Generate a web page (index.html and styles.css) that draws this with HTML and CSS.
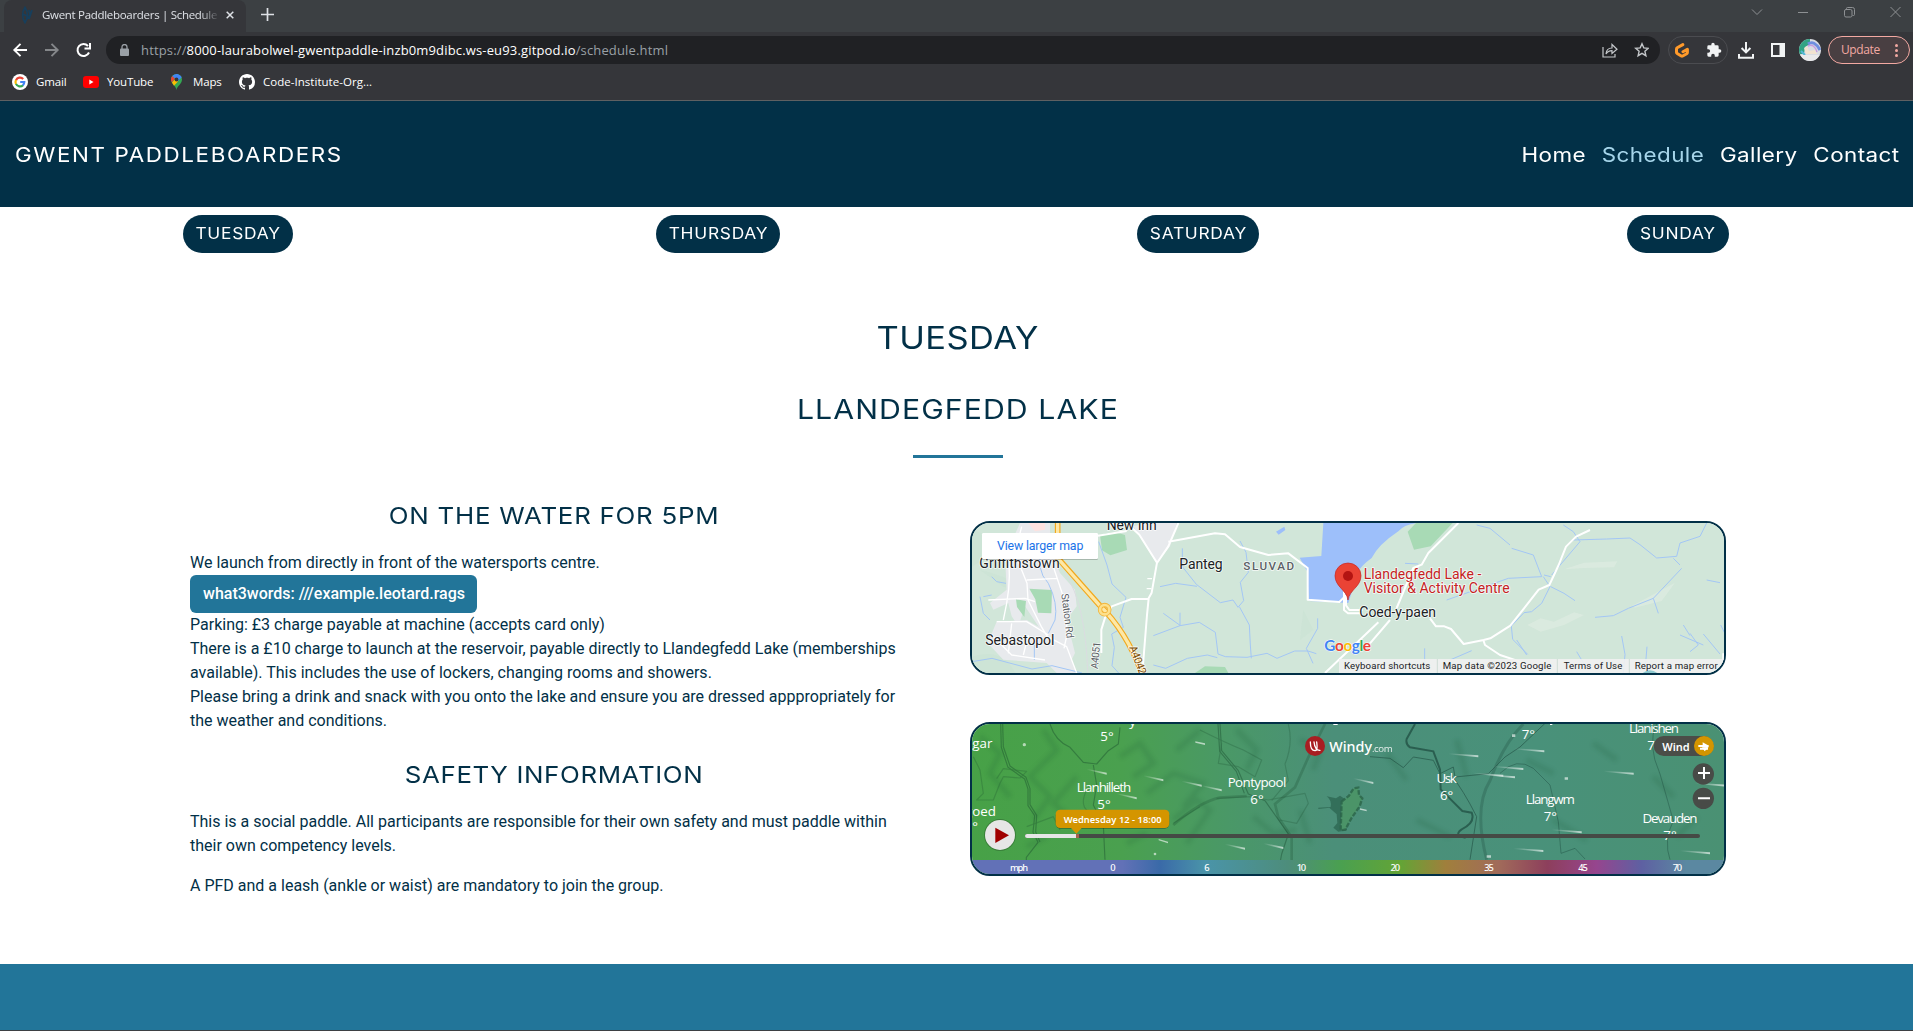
FILE: index.html
```html
<!DOCTYPE html>
<html lang="en">
<head>
<meta charset="utf-8">
<title>Gwent Paddleboarders | Schedule</title>
<link rel="stylesheet" href="styles.css">
</head>
<body>
<div class="browser">
  <div class="tabstrip">
    <div class="tab">
      <svg class="favicon" width="12" height="18" viewBox="0 0 12 18" fill="none" stroke="#173f5c" stroke-width="1.800"><path d="M4 1.500C1 6 1 12 4 16.500 7 12 7 6 4 1.500ZM2 8l4 2M8 4l1 5-3 4M8 13l3-9"/></svg>
      <span class="tab-title">Gwent Paddleboarders | Schedule</span>
      <svg class="tab-close" width="8" height="8" viewBox="0 0 8 8" stroke="#dee1e6" stroke-width="1.500"><path d="M.7.7l6.600 6.600M7.300.7L.7 7.300"/></svg>
    </div>
    <svg class="new-tab" width="13" height="13" viewBox="0 0 13 13" stroke="#dee1e6" stroke-width="1.700"><path d="M6.500 0v13M0 6.500h13"/></svg>
    <svg class="window-controls" width="150" height="12" viewBox="0 0 150 12" fill="none" stroke="#8d9093" stroke-width="1"><path d="M1 3.500l5 5 5-5M47 6.500h10M139.500 1l10 10M149.500 1l-10 10"/><rect x="93.500" y="3.500" width="7.500" height="7.500" rx="1.500"/><path d="M95.500 3.200V2.500q0-1 1-1h5q2 0 2 2v5q0 1-1 1h-1"/></svg>
  </div>
  <div class="toolbar">
    <svg class="nav-icons" width="80" height="16" viewBox="0 0 80 16" fill="none" stroke-width="1.900"><path stroke="#fff" d="M15 8H2.500M8.500 1.800L2.300 8l6.200 6.200"/><path stroke="#85878a" d="M33 8h12.500M39.500 1.800L45.700 8l-6.200 6.200"/><path stroke="#fff" d="M77 10.500A6 6 0 1 1 76 4M78 1v5.500h-5.500" stroke-width="2"/></svg>
    <div class="omnibox">
      <svg width="9" height="12" viewBox="0 0 9 12"><rect y="4.500" width="9" height="7.500" rx="1" fill="#9aa0a6"/><path d="M2 5V3a2.500 2.500 0 0 1 5 0v2" fill="none" stroke="#9aa0a6" stroke-width="1.300"/></svg>
      <span class="url">https://<b>8000-laurabolwel-gwentpaddle-inzb0m9dibc.ws-eu93.gitpod.io</b>/schedule.html</span>
      <svg class="omni-actions" width="47" height="16" viewBox="0 0 47 16" fill="none" stroke="#c4c7ca" stroke-width="1.200"><path d="M1 5v10h12v-3M4 12c.3-4 2.200-6 6-6V2.500L15 7.200 10 11.500V8.700C7.500 8.700 5.500 9.500 4 12Z"/><path stroke-width="1.400" d="M40 1.800l1.800 4.100 4.500.4-3.400 3 1 4.400-3.900-2.300-3.900 2.300 1-4.400-3.400-3 4.500-.4Z"/></svg>
    </div>
    <div class="extensions">
      <svg width="14" height="15" viewBox="0 0 14 15" fill="none" stroke="#ff9a2a" stroke-width="3" stroke-linejoin="round" stroke-linecap="round"><path d="M7.800 1.600L2.200 4.800q-.7.400-.7 1.200v3.200q0 .8.700 1.200L6.300 13q.7.400 1.400 0l4-2.300q.7-.4.700-1.200V6.300L8 8.800"/></svg>
      <svg width="16" height="16" viewBox="0 0 24 24" fill="#f1f3f4"><path d="M20.500 11H19V7a2 2 0 0 0-2-2h-4V3.500a2.500 2.500 0 0 0-5 0V5H4a2 2 0 0 0-2 2v3.800h1.500a2.700 2.700 0 0 1 0 5.400H2V20a2 2 0 0 0 2 2h3.800v-1.500a2.700 2.700 0 0 1 5.400 0V22H17a2 2 0 0 0 2-2v-4h1.500a2.500 2.500 0 0 0 0-5z"/></svg>
    </div>
    <svg class="download" width="16" height="17" viewBox="0 0 16 17" fill="none" stroke="#f1f3f4" stroke-width="2"><path d="M8 0v10M3.600 6L8 10.400 12.400 6M1 12v3.800h14V12"/></svg>
    <svg class="side-panel" width="14" height="14" viewBox="0 0 14 14"><path fill="#f1f3f4" fill-rule="evenodd" d="M0 0h14v14H0zM2 2v10h6.500V2z"/></svg>
    <svg class="avatar" width="22" height="22" viewBox="0 0 22 22"><defs><clipPath id="av"><circle cx="11" cy="11" r="11"/></clipPath></defs><g clip-path="url(#av)"><path fill="#d9dce2" d="M0 0h22v22H0z"/><path fill="#32a383" d="M0 0h11v5L6 8l-1 7H0z"/><path d="M9 5c4-3 8-1 12 6" fill="none" stroke="#6f8ee0" stroke-width="3"/><path d="M9 7c4-2 7 0 9 6" fill="none" stroke="#c79be0" stroke-width="1.500"/><path d="M5 9l3-2 2 5 6-1 2 4H7z" fill="#f1e3d0"/><path d="M2 12l4 4" stroke="#55b6d8" stroke-width="2"/><path fill="#e9e9ea" d="M0 16h22v6H0z"/></g></svg>
    <div class="update"><span>Update</span><svg width="3" height="13" viewBox="0 0 3 13" fill="#f3a9a2"><circle cx="1.500" cy="1.500" r="1.500"/><circle cx="1.500" cy="6.500" r="1.500"/><circle cx="1.500" cy="11.500" r="1.500"/></svg></div>
  </div>
  <div class="bookmarks">
    <div class="bm"><svg width="16" height="16" viewBox="0 0 16 16" fill="none" stroke-width="2.200"><circle cx="8" cy="8" r="8" fill="#fff"/><path stroke="#ea4335" d="M4 6.200A4.400 4.400 0 0 1 11.200 5"/><path stroke="#fbbc05" d="M4 6A4.400 4.400 0 0 0 4 10"/><path stroke="#34a853" d="M4 9.900A4.400 4.400 0 0 0 11 11.200"/><path stroke="#4285f4" d="M8.200 8H12.300A4.400 4.400 0 0 1 10.800 11.300"/></svg><span>Gmail</span></div>
    <div class="bm yt"><svg width="16" height="12" viewBox="0 0 16 12"><rect width="16" height="12" rx="3" fill="#f00"/><path d="M6.300 3.500v5L10.500 6z" fill="#fff"/></svg><span>YouTube</span></div>
    <div class="bm maps"><svg width="11" height="16" viewBox="0 0 11 16"><path fill="#34a853" d="M5.500 16C5 12 0 10 0 5.500a5.500 5.500 0 0 1 11 0C11 10 6 12 5.500 16z"/><path fill="#fbbc04" d="M1 8.500L4 5l3 2.500-4 4.200z"/><path fill="#ea4335" d="M0 5.500Q0 3 1.300 2L4 4.500 .9 8.300Q0 7 0 5.500z"/><path fill="#4285f4" d="M1.300 2A5.500 5.500 0 0 1 10.600 3.500L7 7 4 4.600z"/><circle cx="5.500" cy="5.500" r="1.900" fill="#35363a"/></svg><span>Maps</span></div>
    <div class="bm gh"><svg width="16" height="16" viewBox="0 0 16 16" fill="#fff"><path d="M8 0C3.580 0 0 3.580 0 8c0 3.540 2.290 6.530 5.470 7.590.4.070.55-.17.550-.38 0-.19-.01-.82-.01-1.490-2.010.37-2.530-.49-2.690-.94-.09-.23-.48-.94-.82-1.130-.28-.15-.68-.52-.01-.53.630-.01 1.080.58 1.230.82.720 1.210 1.870.87 2.330.66.070-.52.280-.87.510-1.070-1.780-.2-3.640-.89-3.640-3.950 0-.87.310-1.590.82-2.150-.08-.2-.36-1.020.08-2.120 0 0 .67-.21 2.200.82.640-.18 1.320-.27 2-.27s1.360.09 2 .27c1.530-1.040 2.200-.82 2.200-.82.440 1.100.16 1.920.08 2.120.51.560.82 1.270.82 2.150 0 3.070-1.870 3.750-3.650 3.950.290.250.540.730.540 1.480 0 1.070-.01 1.930-.01 2.200 0 .21.150.46.550.38A8.010 8.010 0 0 0 16 8c0-4.420-3.580-8-8-8z"/></svg><span>Code-Institute-Org...</span></div>
  </div>
</div>

<header class="site-header">
  <a class="brand wide">GWENT PADDLEBOARDERS</a>
  <nav class="site-nav wide"><a>Home</a><a class="active">Schedule</a><a>Gallery</a><a>Contact</a></nav>
</header>

<div class="days">
  <a class="d1"><span class="wide">TUESDAY</span></a><a class="d2"><span class="wide">THURSDAY</span></a><a class="d3"><span class="wide">SATURDAY</span></a><a class="d4"><span class="wide">SUNDAY</span></a>
</div>

<main>
  <h1 class="wide">TUESDAY</h1>
  <h2 class="wide">LLANDEGFEDD LAKE</h2>
  <hr>
  <div class="columns">
    <section class="info">
      <h3 class="wide">ON THE WATER FOR 5PM</h3>
      <p>We launch from directly in front of the watersports centre.<br>
      <a class="w3w">what3words: ///example.leotard.rags</a><br>
      Parking: £3 charge payable at machine (accepts card only)<br>
      There is a £10 charge to launch at the reservoir, payable directly to Llandegfedd Lake (memberships available). This includes the use of lockers, changing rooms and showers.<br>
      Please bring a drink and snack with you onto the lake and ensure you are dressed apppropriately for the weather and conditions.</p>
      <h3 class="wide safety">SAFETY INFORMATION</h3>
      <p>This is a social paddle. All participants are responsible for their own safety and must paddle within their own competency levels.</p>
      <p>A PFD and a leash (ankle or waist) are mandatory to join the group.</p>
    </section>
    <section class="maps-col">
      <div class="card">
        <svg class="map" viewBox="36 39 2256 450" width="752" height="150">
          <path fill="#d1e6d9" d="M36 39h2256v450H36z"/>
          <path fill="#c9e2d3" d="M36 60l60 20v50l-60 40zM36 440q90-30 130 49H36zM1030 300l30 60-40 30zM60 180q90 20 130 60l-60-10z" opacity=".6"/>
          <path fill="#e8eaed" d="M180 39h90v80l30 70 45 50 5 50-30 40 25 100-30 60-40-60-20-50-60-90-20 60-20-30-10-40-45 20-10-20 50-40-5-100zM560 39h90l-20 70-40 50-70-110zM110 335l90-5 70 40 50 40 30 79h-60l-30-30-130-10-47-50z"/>
          <path fill="#fde2e0" d="M205 39h50v20l-30 5z"/>
          <path fill="#a8dab5" d="M420 75q40-15 75 0l6 45-50 16-25-15zM208 236l68 4-2 70-40-2-8-40zM168 268l30 5-5 48-22-30zM705 489l30-20 60 2 10 18z"/>
          <path fill="#9dbffa" d="M1090 39h280q-40 6-55 25-60 40-80 80-30 22-40 40l-30 95-118-6-6-90-22-40 65-5zM948 65l25-15 3 10-20 14z"/>
          <g fill="none" stroke="#a3c6f5" stroke-width="3" stroke-linejoin="round">
            <path d="M667 115v55l42 53 72 55 38-8 15 22 17-20-10-55 24-30-7-60-18-34M600 230l47-10 64 9M838 290l30 55 3 60 3 40M580 377l80-30 58-10 48 30 8 65 22 8 65 2 60-12 30 15 53-22 40 0 25 8M610 310l50 36v-38M580 465l37 10 65-30 60-10 30 8M1073 325v30l-34 60 20 45M416 95l25 70 15 57 42 40-18 60 10 30-35 20 8 40-7 55 20 22M60 260l10 50 20 20M70 260l25-5M95 200l15 15 28 5M36 455l60-10 120 32 60-10 90 22M223 390v60"/>
            <path d="M245 100q-20 80 20 120 30 60 20 110l-20 40"/>
          </g>
          <g fill="none" stroke="#fff" stroke-width="6" stroke-linejoin="round">
            <path d="M185 50l-20 80 36 90 3 50 40 80 18 30 58 30 30 79M270 140l40 120 12 110-10 45M85 270l110-5 30 10M145 150q8 60-5 130l-10 50M200 210l90-5M110 335l90 0 65 40M95 375l60 60 100 15M155 340l-10 90M205 375l-15 60" stroke-width="4"/>
            <path d="M414 77l86-14M500 39l38 35 53 84-16 90-10 18-50 1-60 22-17 25-14 45v70M655 39l-30 70-34 50M566 265l-5 50-14 174M625 95l140-25 30 3 45 38 85 24 60-5 58 44v95l95 7 20-20 0 30 10 14 40 0M1095 489l160-152"/>
            <path d="M562 206h14M560 236h14" stroke-width="4"/>
          </g>
          <path d="M315 190q62 90 68 299" stroke="#dadce0" stroke-width="3" fill="none"/>
          <g fill="none"><path d="M293 39v105L418 285Q500 365 545 489" stroke="#f2a91e" stroke-width="17"/><path d="M293 39v105L418 285Q500 365 545 489" stroke="#fde8a6" stroke-width="10"/><circle cx="434" cy="299" r="14" stroke="#f2b63c" stroke-width="13"/><circle cx="434" cy="299" r="14" stroke="#fde08b" stroke-width="8"/></g>
          <g transform="translate(1140 0)">
            <path fill="#a8dab5" d="M203 65l25-26h110l-66 70-50 10z"/>
            <path fill="#dcebe0" d="M672 178l60-20 100-4-10 18-90 2zM562 345l40-20 40 10 60-28 30 8-60 30-70 20zM875 288l130-70-40 55-80 20z" opacity=".8"/>
            <g fill="none" stroke="#a3c6f5" stroke-width="3" stroke-linejoin="round"><path d="M410 45l40 10 60 50M515 115l65 20 25 65-100 5-185 65M610 200l20 30-25 50-30 25-23 3-38 40 4 40 45 45M632 200l-20-5M700 90l100-3 70-3 30 20 50 40 60-5 10-40 60-20 20-40M670 45l30 20 20 30-85 100M632 230l40 20 33 22M1000 145l20 20M1025 175l-85 90-75 30-45 22-55 5M940 265l15 45M845 378l10 55-5 56M921 410l-5 60M1020 375l70 30M1050 370l25 35-25 20M1030 345l20 32M1090 372l50 60M195 160l40 2M254 415v45M330 450l65-28M530 390l30 45M710 425l30 50M1100 210l40 8M1142 345l15 30"/></g>
            <g fill="none" stroke="#fff" stroke-width="6" stroke-linejoin="round"><path d="M355 39l-90 90-20 35-25 10-50 120M90 400l60-70M12 240v60l12 10h40M270 325l18 24h25l20 8 38 45 60-12 20-5 60-38 85-108 32-14 28-60 22-55 30-30 42-20M430 390l5 15 45 30 60 20 60 34M1150 430v59"/></g>
          </g>
          <g class="lab" text-anchor="start">
            <text x="440" y="60" font-size="42" textLength="150">New Inn</text>
            <text x="58" y="174" font-size="42" textLength="241">Griffithstown</text>
            <text x="76" y="405" font-size="42" textLength="207">Sebastopol</text>
            <text x="658" y="177" font-size="42" textLength="130">Panteg</text>
            <text x="850" y="180" font-size="35" textLength="152" class="muted" font-weight="500">SLUVAD</text>
            <text x="1198" y="321" font-size="42" textLength="230">Coed-y-paen</text>
            <text x="304" y="252" font-size="31" textLength="135" class="muted" transform="rotate(83 304 252)">Station Rd</text>
            <text x="413" y="478" font-size="31" textLength="82" class="muted" transform="rotate(-84 413 478)">A4051</text>
            <text x="507" y="412" font-size="33" textLength="90" class="trunk" transform="rotate(69 507 412)">A4042</text>
            <text x="1211" y="206" font-size="42" textLength="353" class="poi">Llandegfedd Lake -</text>
            <text x="1211" y="249" font-size="42" textLength="438" class="poi">Visitor &amp; Activity Centre</text>
          </g>
          <path fill="#ea4335" stroke="#c5221f" stroke-width="2" d="M1164 270c-4-30-39-40-39-73a39 38 0 0 1 78 0c0 33-35 43-39 73z"/><circle cx="1164" cy="198" r="15" fill="#b31412"/>
          <text class="goog" x="1093" y="423" font-size="46" textLength="140"><tspan fill="#4285f4">G</tspan><tspan fill="#ea4335">o</tspan><tspan fill="#fbbc04">o</tspan><tspan fill="#4285f4">g</tspan><tspan fill="#34a853">l</tspan><tspan fill="#ea4335">e</tspan></text>
          <rect x="66" y="71" width="348" height="79" rx="4" fill="#0003"/><rect x="66" y="69" width="348" height="78" rx="4" fill="#fff"/>
          <text x="111" y="120" font-size="37" textLength="259" fill="#1a73e8" class="rb">View larger map</text>
          <path fill="#f1f1f1" fill-opacity=".88" d="M1137 447h1155v42H1137z"/>
          <path stroke="#cfdcd5" stroke-width="3" d="M1432 447v42M1792 447v42M2008 447v42"/>
          <path fill="#8ec9cf" d="M2048 489q22-16 44 0z"/>
          <g class="rb" font-size="29" fill="#202124"><text x="1152" y="477" textLength="259">Keyboard shortcuts</text><text x="1448" y="477" textLength="326">Map data ©2023 Google</text><text x="1811" y="477" textLength="176">Terms of Use</text><text x="2024" y="477" textLength="249">Report a map error</text></g>
        </svg>
      </div>
      <div class="card">
        <svg class="map" viewBox="36 42 2256 450" width="752" height="150">
          <defs>
            <linearGradient id="wind"><stop offset="0" stop-color="#47a147"/><stop offset=".2" stop-color="#4aa04f"/><stop offset=".34" stop-color="#4a9867"/><stop offset=".48" stop-color="#4b8f79"/><stop offset=".75" stop-color="#49917a"/><stop offset="1" stop-color="#4a9173"/></linearGradient>
            <linearGradient id="scale"><stop offset="0" stop-color="#6271b7"/><stop offset=".2" stop-color="#6271b7"/><stop offset=".25" stop-color="#3a6aa8"/><stop offset=".31" stop-color="#4a94a9"/><stop offset=".42" stop-color="#4d8d7b"/><stop offset=".49" stop-color="#4aa050"/><stop offset=".57" stop-color="#63a436"/><stop offset=".63" stop-color="#a07f3c"/><stop offset=".7" stop-color="#a16b5a"/><stop offset=".765" stop-color="#8d3f5c"/><stop offset=".83" stop-color="#96458e"/><stop offset=".89" stop-color="#5e60a2"/><stop offset=".95" stop-color="#5b88a1"/><stop offset="1" stop-color="#5b88a1"/></linearGradient>
            <linearGradient id="streak"><stop offset="0" stop-color="#fff" stop-opacity="0"/><stop offset="1" stop-color="#fff" stop-opacity=".65"/></linearGradient>
            <filter id="soft"><feGaussianBlur stdDeviation="7"/></filter>
          </defs>
          <path fill="url(#wind)" d="M36 42h2256v450H36z"/>
          <g fill="none" stroke="#1c5a34" stroke-width="16" opacity=".17" filter="url(#soft)"><path d="M60 80l60 50-30 60 60 70M250 60l40 60-80 80 60 60-50 70M350 200l-70 80 60 50M480 140l60-40 40 60-60 40M560 250l80-60 90 30-60 70M640 330l70-60 40 30-70 100M830 60l60 60-30 60M880 320l60 50 70-10M720 60l-70 60M1020 90l60 30-20 60M1020 300l30 100M1280 130l60 80M1370 330l100 50M1490 90l30 110M1700 150l80 40M1900 100l70 50M1780 330l100 60M2080 200l60 60M2150 380l60-60M500 400l60-30M200 410l60-30"/></g>
          <g fill="none" stroke="#17472c" stroke-width="3.500" opacity=".4" stroke-linejoin="round"><path d="M122 42l2 70 20 60 50 35 10 30 0 50 20 30-5 50 15 30-35 45 0 47M128 42l2 68 20 58 48 34 12 34 0 48 20 32-3 50 13 30M270 42q15 50 60 70l40 45 40 5 35-40 30-20 5-50M400 165l10 60-10 60 30 60 5 104M780 42l5 80 50 60 30 70 50 20 70 100-20 60-5 27M774 42l5 82 50 60 24 66"/><path d="M200 350l80-30 20 40M40 140l20 40 10 70-20 20 50 0 20-50 10-20 50 4 20-20-70-8-20 30M720 60q80 40 130 60l55 30-20 50-50-30-60-10 10-60M770 265l105-5 50 10 110-20 10 30-35 60-50-10M640 340l80-50M380 240q-20 40 0 60l50 10" opacity=".6"/><path d="M985 42q15 60-10 120l10 50-50 60" opacity=".6"/></g>
          <g fill="none" stroke="#17472c" stroke-width="8" opacity=".25"><path d="M1095 42l-50 100-40 90-60 50 10 40 40 60 0 70M640 345q80-70 140-82l80-5"/></g>
          <path fill="#1c4f3b" opacity=".5" d="M1075 293l37-2q4-20-12-32l28 6 12-8 20 14v90l-25 4-15-12 12-14-2-26-22-20-33 4z"/>
          <path fill="#4b9468" stroke="#2a6449" stroke-width="7" stroke-opacity=".8" stroke-dasharray="14 5" d="M1145 275l22-18 14-22 14-2 2 22 10 10-8 24-25 36-18 34-14 2z"/>
          <g transform="translate(1140 0)">
            <g fill="none" stroke="#163f35" opacity=".6"><path stroke-width="6" d="M225 42l-25 45q-4 15 10 25l70 12 20 54 2 60 30 30 35 35 28 5q12 30-30 50-15 10-8 20l20 5"/><path stroke-width="3" d="M90 140l60 5 40 28 30-32 60 10 20 40 40-20 5 30 100-10 50-50 45-30 75-71M330 190q40 50 80 130l-20 129" opacity=".8"/><path stroke-width="9" opacity=".4" d="M550 42q-60 60-100 170-50 80-10 237"/><path stroke-width="3" opacity=".6" d="M480 190q50-50 100-15l50 50 25 110 8 95 42-15 30 32M950 42q-30 60 10 150l40 140q-30 60-10 117"/></g>
          </g>
          <g fill="url(#streak)"><path id="st" d="M0 0l60 12v6L0 3z" transform="translate(380 176)"/><use href="#st" transform="translate(170 20)"/><use href="#st" transform="translate(285 36) "/><use href="#st" transform="translate(345 50)"/><use href="#st" transform="translate(90 74)"/><use href="#st" transform="translate(415 225)"/><use href="#st" transform="translate(530 223)"/><use href="#st" transform="translate(800 28)"/></g>
          <g fill="url(#streak)"><path id="sr" d="M0 0l90 6v6L0 3z" transform="translate(1465 130)"/><use href="#sr" transform="translate(75 58)"/><use href="#sr" transform="translate(110 63)"/><use href="#sr" transform="translate(198 -15)"/><use href="#sr" transform="translate(135 38)"/><use href="#sr" transform="translate(466 52)"/><use href="#sr" transform="translate(310 228)"/><use href="#sr" transform="translate(195 284)"/><use href="#sr" transform="translate(695 291)"/><use href="#sr" transform="translate(740 88)"/></g>
          <g fill="#fff" opacity=".6"><circle cx="193" cy="104" r="5"/><circle cx="585" cy="432" r="4"/><path d="M706 94l29 6v5l-29-7zM596 387l28 8v5l-28-9zM1656 73h10v8h-10zM1814 202h10v7h-10zM1580 436h13v7h-13zM1200 295l20 4v5l-20-5z"/></g>
          <g class="wl" font-size="40" text-anchor="middle">
            <text x="97" y="115" text-anchor="end">egar</text><text x="108" y="317" text-anchor="end">goed</text><text x="45" y="364">°</text><text x="518" y="47">y</text><text x="441" y="92">5°</text>
            <text x="432" y="246" textLength="163">Llanhilleth</text><text x="432" y="297">5°</text>
            <text x="891" y="230" textLength="176">Pontypool</text><text x="891" y="281">6°</text>
            <text x="1460" y="218" textLength="61">Usk</text><text x="1460" y="270">6°</text>
            <text x="1705" y="87">7°</text><text x="1771" y="282" textLength="147">Llangwm</text><text x="1771" y="333">7°</text>
            <text x="2082" y="69" textLength="150">Llanishen</text><text x="2082" y="120">7°</text>
            <text x="2130" y="339" textLength="165">Devauden</text><text x="2130" y="391">7°</text>
          </g>
          <path stroke="#fff" stroke-width="4" d="M1120 43h13M1770 43h7"/>
          <circle cx="1065" cy="108" r="30" fill="#a81e22"/><path d="M1051 96q0 26 14 26 9 0 5-26M1062 96q3 26 18 25" fill="none" stroke="#fff" stroke-width="4" stroke-linecap="round"/>
          <text class="wd" x="1108" y="125" font-size="43" font-weight="500" textLength="128">Windy</text><text class="wl" x="1236" y="126" font-size="29" textLength="62" opacity=".85">.com</text>
          <rect x="195" y="372" width="2025" height="12" rx="6" fill="#454a45"/><path fill="#e6e6e6" d="M201 372h147v12H201a6 6 0 0 1 0-12z"/><path fill="#a8604c" d="M348 372h9v12h-9z"/>
          <rect x="287" y="302" width="341" height="54" rx="14" fill="#0005"/><path fill="#d49500" d="M301 299h313q14 0 14 14v27q0 14-14 14H365l-16 17-16-17h-32q-14 0-14-14v-27q0-14 14-14z"/>
          <text class="wd" x="311" y="339" font-size="28" font-weight="600" textLength="294">Wednesday 12 - 18:00</text>
          <circle cx="120" cy="375" r="48" fill="#0003"/><circle cx="120" cy="375" r="45" fill="#e6e6e6"/><path fill="#a00000" d="M106 353l41 23-41 23z"/>
          <rect x="2081" y="78" width="180" height="60" rx="30" fill="#4b4d48"/><text class="wd" x="2107" y="122" font-size="33" font-weight="600" textLength="82">Wind</text>
          <circle cx="2232" cy="108" r="30" fill="#d49500"/><path fill="none" stroke="#fff" stroke-width="6" d="M2215 108h30M2220 116h24"/><path fill="#fff" d="M2228 97l20 11-6 4-14-1zM2226 112h20l-12 12z"/>
          <circle cx="2230" cy="192" r="32" fill="#484b47"/><circle cx="2230" cy="265" r="32" fill="#484b47"/><path stroke="#fff" stroke-width="6" d="M2214 189h36M2232 171v36M2214 265h36"/>
          <path fill="url(#scale)" d="M36 450h2256v42H36z"/>
          <g class="wd" font-size="28" font-weight="500" text-anchor="middle"><text x="177" y="482" textLength="54">mph</text><text x="459" y="482">0</text><text x="741" y="482">6</text><text x="1024" y="482" textLength="28">10</text><text x="1306" y="482" textLength="29">20</text><text x="1587" y="482" textLength="29">35</text><text x="1869" y="482" textLength="29">45</text><text x="2152" y="482" textLength="28">70</text></g>
        </svg>
      </div>
    </section>
  </div>
</main>
<footer class="site-footer"></footer>
</body>
</html>
```
FILE: styles.css
```css
* { box-sizing: border-box; }
body { margin: 0; height: 1031px; overflow: hidden; background: #fff; color: #023047; font: 400 16px/24px Roboto, sans-serif; display: flex; flex-direction: column; }
svg { display: block; flex: none; }

.browser { height: 101px; background: #35363a; border-bottom: 1px solid #5f6062; font: 12px/16px "Open Sans", sans-serif; color: #fff; white-space: nowrap; flex: none; }
.tabstrip { height: 32px; background: #3c4043; display: flex; align-items: flex-start; }
.tab { width: 242px; height: 32px; margin-left: 4px; background: #35363a; border-radius: 8px 8px 0 0; display: flex; align-items: flex-start; }
.favicon { margin: 6px 0 0 17px; }
.tab-title { width: 176px; margin: 7px 0 0 9px; overflow: hidden; color: #dee1e6; font-size: 11.500px; letter-spacing: -.3px; -webkit-mask-image: linear-gradient(90deg, #000 158px, transparent 178px); mask-image: linear-gradient(90deg, #000 158px, transparent 178px); }
.tab-close { margin: 11px 0 0 8px; }
.new-tab { margin: 8px 0 0 15px; }
.window-controls { margin: 6px 12px 0 auto; }
.toolbar { height: 36px; display: flex; align-items: center; padding: 4px 3px 4px 12px; }
.omnibox { margin-left: 14px; width: 1554px; height: 28px; border-radius: 14px; background: #202124; display: flex; align-items: center; padding: 0 11px 0 14px; color: #9aa0a6; font-size: 13px; letter-spacing: .156px; }
.omnibox b { font-weight: 400; color: #fff; }
.url { margin-left: 12px; }
.omni-actions { margin-left: auto; }
.extensions { margin-left: 8px; width: 60px; height: 28px; border: 1px solid #4b4c50; border-radius: 14px; display: flex; align-items: center; justify-content: space-between; padding: 0 5px 0 6px; }
.download { margin-left: 10px; }
.side-panel { margin-left: 17px; }
.avatar { margin-left: 14px; }
.update { margin-left: 7px; width: 82px; height: 28px; border: 1px solid #f3a9a2; border-radius: 14px; background: #493f42; color: #f3a9a2; letter-spacing: -.4px; display: flex; align-items: center; justify-content: space-between; padding: 0 11px 0 12px; }
.bookmarks { height: 32px; display: flex; align-items: center; padding: 0 0 4px 12px; }
.bm { display: flex; align-items: center; gap: 8px; font-size: 11.500px; letter-spacing: -.15px; height: 20px; width: 71px; }
.yt { width: 88px; }
.maps { width: 68px; gap: 11px; }
.gh { letter-spacing: .03px; }

/* display type is set slightly extended */
.wide { font-family: Inter, sans-serif; font-weight: 400; transform: scaleX(1.12); }

.site-header { height: 106px; flex: none; background: #023047; color: #fff; display: flex; justify-content: space-between; align-items: center; padding: 1px 13px 0 15px; }
.brand { font-size: 20px; letter-spacing: 1.430px; transform-origin: left; }
.site-nav { display: flex; gap: 14px; font-size: 20px; letter-spacing: .4px; transform-origin: right; }
.site-nav .active { color: #a6d5ea; }

.days { display: grid; grid-template-columns: repeat(4, 1fr); justify-items: center; margin: 8px -5px 0 -2px; flex: none; }
.days a { height: 38px; border-radius: 19px; background: #023047; color: #fff; font-size: 15.500px; line-height: 37px; letter-spacing: .65px; text-align: center; }
.days span { display: inline-block; }
.d1 { width: 110px; }
.d2 { width: 124px; }
.d3 { width: 122px; }
.d4 { width: 102px; }

main { height: 711px; flex: none; }
h1, h2, h3 { margin: 0; text-align: center; }
h1, h2 { width: fit-content; margin: 0 auto; }
h1 { font-size: 30.800px; line-height: 38px; padding: 66px 0 0 2px; letter-spacing: .4px; }
h2 { font-size: 27px; line-height: 34px; padding: 36px 0 0 3px; letter-spacing: .95px; }
hr { width: 90px; height: 3px; border: 0; background: #227599; margin: 28px auto 0 913px; }
.columns { display: flex; padding: 0 187px 0 190px; justify-content: space-between; }
.info { width: 727px; padding-top: 44px; }
h3 { font-size: 23.100px; line-height: 29px; letter-spacing: .67px; text-indent: 1px; }
.info p { margin: 20px 0 0; width: 712px; }
.info p + p { margin-top: 16px; }
.w3w { display: inline-block; height: 38px; line-height: 24px; padding: 7px 12px 5px 13px; background: #227599; color: #fff; border-radius: 6px; font-weight: 500; vertical-align: middle; }
.safety { margin-top: 28px; letter-spacing: .55px; }
.maps-col { width: 756px; padding-top: 63px; display: flex; flex-direction: column; gap: 47px; }
.card { width: 756px; height: 154px; border: 2px solid #023047; border-radius: 20px; overflow: hidden; }
.lab text { font-family: Roboto, sans-serif; fill: #202124; stroke: #fff; stroke-width: 5px; stroke-opacity: .8; paint-order: stroke; stroke-linejoin: round; }
.lab .muted { fill: #5b6065; }
.lab .trunk { fill: #7a4a00; }
.lab .poi { fill: #c5221f; }
.rb { font-family: Roboto, sans-serif; }
.goog { font-family: Lato, sans-serif; font-weight: 700; stroke: #fff; stroke-width: 3px; paint-order: stroke; }
.wl { font-family: "Open Sans", sans-serif; fill: #fff; }
.wd { font-family: "Noto Sans", sans-serif; fill: #fff; }
.site-footer { height: 67px; flex: none; background: #227599; border-bottom: 1px solid #3d4043; }
```
